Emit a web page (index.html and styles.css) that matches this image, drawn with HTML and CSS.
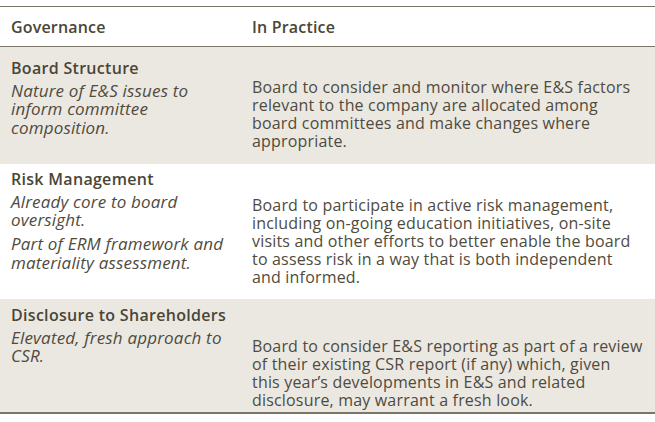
FILE: index.html
```html
<!DOCTYPE html>
<html lang="en">
<head>
<meta charset="utf-8">
<title>Governance — In Practice</title>
<link rel="stylesheet" href="styles.css">
</head>
<body>
<table class="gov-table">
  <thead>
    <tr>
      <th class="col-left">Governance</th>
      <th class="col-right">In Practice</th>
    </tr>
  </thead>
  <tbody>
    <tr class="row row--shaded row--first">
      <td class="cell-left">
        <div class="topic">Board Structure</div>
        <p class="note">Nature of E&amp;S issues to inform committee composition.</p>
      </td>
      <td class="cell-right">
<p class="practice">Board to consider and monitor where E&amp;S factors
relevant to the company are allocated among
board committees and make changes where
appropriate.</p>
      </td>
    </tr>
    <tr class="row">
      <td class="cell-left">
        <div class="topic">Risk Management</div>
        <p class="note">Already core to board oversight.</p>
        <p class="note">Part of ERM framework and materiality assessment.</p>
      </td>
      <td class="cell-right">
<p class="practice">Board to participate in active risk management,
including on-going education initiatives, on-site
visits and other efforts to better enable the board
to assess risk in a way that is both independent
and informed.</p>
      </td>
    </tr>
    <tr class="row row--shaded row--last">
      <td class="cell-left">
        <div class="topic">Disclosure to Shareholders</div>
        <p class="note">Elevated, fresh approach to CSR.</p>
      </td>
      <td class="cell-right">
<p class="practice">Board to consider E&amp;S reporting as part of a review
of their existing CSR report (if any) which, given
this year’s developments in E&amp;S and related
disclosure, may warrant a fresh look.</p>
      </td>
    </tr>
  </tbody>
</table>
</body>
</html>
```

FILE: styles.css
```css
html, body {
  margin: 0;
  padding: 0;
  background: #ffffff;
}

body {
  padding-top: 6px;
  font-family: "Open Sans", "Noto Sans", sans-serif;
  font-size: 16px;
  line-height: 18px;
  letter-spacing: 0.18px;
  color: #4f4b3e;
}

.gov-table {
  width: 100%;
  border-collapse: collapse;
  border-top: 1px solid #7a7565;
  border-bottom: 2px solid #7a7565;
}

.gov-table th {
  text-align: left;
  font-weight: 600;
  color: #4a4636;
  height: 39px;
  padding: 0;
  border-bottom: 1px solid #7a7565;
  vertical-align: middle;
}

.col-left {
  width: 241px;
  padding-left: 11px !important;
  box-sizing: border-box;
}

.col-right {
  padding-left: 11px !important;
}

.row--shaded {
  background: #ebe8e2;
}

.cell-left,
.cell-right {
  vertical-align: top;
}

.cell-left {
  padding: 6px 8px 27px 11px;
}

.cell-right {
  padding: 32px 8px 3px 11px;
}

.row--first .cell-left {
  padding-top: 12px;
}

.row--first .cell-right {
  padding-top: 31px;
}

.row--last .cell-left {
  padding-top: 7px;
}

.row--last .cell-right {
  padding-top: 38px;
}

.topic {
  font-weight: 600;
  color: #4a4636;
  letter-spacing: 0.3px;
}

.note {
  margin: 4.5px 0 0;
  font-style: italic;
  font-size: 17px;
  line-height: 18.5px;
}

.note + .note {
  margin-top: 5.5px;
}

.practice {
  margin: 0;
  white-space: pre-line;
}
```
